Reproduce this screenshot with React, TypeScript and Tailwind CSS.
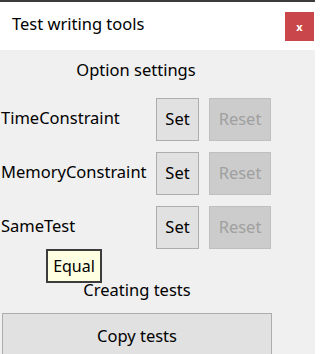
import React from "react";

const font = { fontFamily: '"Noto Sans", "Open Sans", sans-serif' };

function Row({ label }: { label: string }) {
  return (
    <div className="flex items-center h-[43px]">
      <div className="w-[156px] pl-[1px] text-[16.5px] text-black leading-none -mt-[3px]">{label}</div>
      <button className="w-[43px] h-[43px] bg-[#e1e1e1] border border-[#adadad] text-[16.5px] text-black flex items-center justify-center">
        Set
      </button>
      <button className="ml-[10px] w-[62px] h-[43px] bg-[#cccccc] border border-[#bfbfbf] text-[16.5px] text-[#a0a0a0] flex items-center justify-center">
        Reset
      </button>
    </div>
  );
}

export default function App() {
  return (
    <div className="w-[324px] h-[354px] bg-white overflow-hidden relative" style={font}>
      <div className="w-[315px] h-[2px] bg-[#3c3c3c]" />
      <div className="w-[315px] h-[48px] bg-white flex items-center justify-between pl-[12px] pr-[1px]">
        <span className="text-[16.5px] text-black -mt-[3px]">Test writing tools</span>
        <div className="w-[29px] h-[29px] bg-[#c9474a] flex items-center justify-center text-white text-[11px] font-bold leading-none">
          x
        </div>
      </div>
      <div className="w-[315px] h-[304px] bg-[#f0f0f0] relative">
        <div className="h-[48px] pt-[9px] text-center text-[16.5px] text-black pr-[43px] leading-[22px]">
          Option settings
        </div>
        <div className="flex flex-col gap-[11px]">
          <Row label="TimeConstraint" />
          <Row label="MemoryConstraint" />
          <Row label="SameTest" />
        </div>
        <div className="absolute left-[46px] top-[199px] w-[56px] h-[34px] bg-[#ffffe1] border-2 border-[#3c3c3c] text-[16px] text-black flex items-center justify-center">
          Equal
        </div>
        <div className="mt-[30px] h-[22px] text-center text-[16.5px] text-black leading-[22px] pr-[41px]">
          Creating tests
        </div>
        <button className="mt-[12px] ml-[2px] w-[270px] h-[46px] bg-[#e1e1e1] border border-[#adadad] text-[16.5px] text-black flex items-center justify-center">
          Copy tests
        </button>
      </div>
    </div>
  );
}
